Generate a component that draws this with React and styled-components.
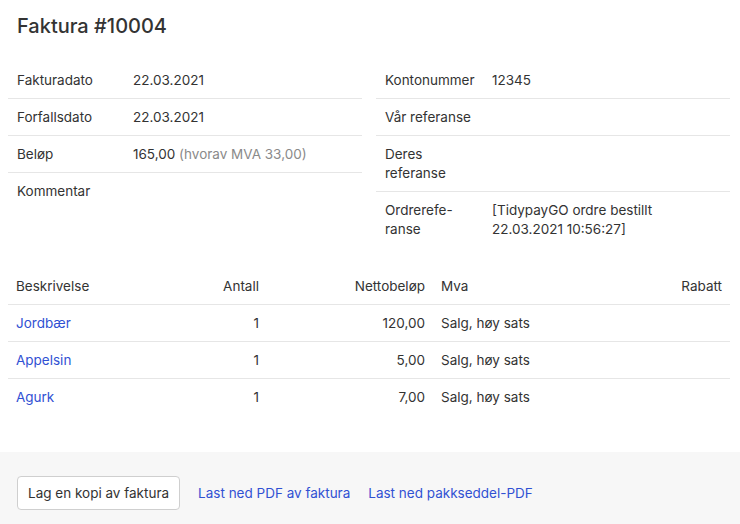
import React from "react";
import styled, { createGlobalStyle } from "styled-components";

const Global = createGlobalStyle`
  html, body { margin: 0; padding: 0; background: #fff; }
  body {
    font-family: Inter, "Noto Sans", "Liberation Sans", sans-serif;
    font-size: 13.5px;
    color: #333;
  }
`;

const Page = styled.div`
  display: flex;
  flex-direction: column;
  min-height: 524px;
`;

const Content = styled.div`
  padding: 0 10px 0 8px;
`;

const Title = styled.h1`
  margin: 0;
  padding: 14px 9px 23px;
  font-size: 20px;
  line-height: 25px;
  font-weight: 500;
  color: #333;
`;

const InfoGrid = styled.div`
  display: grid;
  grid-template-columns: 1fr 1fr;
  column-gap: 14px;
  align-items: start;
`;

const InfoColumn = styled.div`
  display: flex;
  flex-direction: column;
`;

const InfoRow = styled.div`
  display: grid;
  grid-template-columns: ${(p) => p.$labelWidth}px 1fr;
  padding: 9px 9px 8px;
  line-height: 19px;
  border-bottom: 1px solid #e6e6e6;
  &:last-child { border-bottom: none; }
`;

const Label = styled.div`
  color: #333;
`;

const Value = styled.div`
  color: #333;
`;

const Muted = styled.span`
  color: #8a8a8a;
`;

const Table = styled.div`
  margin-top: 21px;
  display: flex;
  flex-direction: column;
`;

const TRow = styled.div`
  display: grid;
  grid-template-columns: 172px 87px 166px 1fr 120px;
  line-height: 19px;
  border-bottom: 1px solid #e6e6e6;
  &:last-child { border-bottom: none; }
`;

const Cell = styled.div`
  padding: 9px 8px 8px;
  text-align: ${(p) => (p.$right ? "right" : "left")};
  color: #333;
`;

const Link = styled.a`
  color: #3151d3;
  text-decoration: none;
  cursor: pointer;
`;

const Footer = styled.div`
  margin-top: 37px;
  flex: 1;
  background: #f7f7f7;
  padding: 24px 17px;
  display: flex;
  align-items: center;
  gap: 18px;
`;

const Button = styled.button`
  font-family: inherit;
  font-size: 13.5px;
  color: #333;
  background: #fff;
  border: 1px solid #cfcfcf;
  border-radius: 4px;
  height: 34px;
  padding: 0 10px;
  cursor: pointer;
`;

const FooterLink = styled(Link)`
  font-size: 13.5px;
`;

const leftRows = [
  ["Fakturadato", "22.03.2021"],
  ["Forfallsdato", "22.03.2021"],
  ["Beløp", <>165,00 <Muted>(hvorav MVA 33,00)</Muted></>],
  ["Kommentar", ""],
];

const rightRows = [
  ["Kontonummer", "12345"],
  ["Vår referanse", ""],
  [<>Deres<br />referanse</>, ""],
  [<>Ordrerefe-<br />ranse</>, <>[TidypayGO ordre bestillt<br />22.03.2021 10:56:27]</>],
];

const items = [
  ["Jordbær", "1", "120,00", "Salg, høy sats"],
  ["Appelsin", "1", "5,00", "Salg, høy sats"],
  ["Agurk", "1", "7,00", "Salg, høy sats"],
];

export default function App() {
  return (
    <Page>
      <Global />
      <Content>
        <Title>Faktura #10004</Title>
        <InfoGrid>
          <InfoColumn>
            {leftRows.map(([l, v], i) => (
              <InfoRow key={i} $labelWidth={116}>
                <Label>{l}</Label>
                <Value>{v}</Value>
              </InfoRow>
            ))}
          </InfoColumn>
          <InfoColumn>
            {rightRows.map(([l, v], i) => (
              <InfoRow key={i} $labelWidth={107}>
                <Label>{l}</Label>
                <Value>{v}</Value>
              </InfoRow>
            ))}
          </InfoColumn>
        </InfoGrid>
        <Table>
          <TRow>
            <Cell>Beskrivelse</Cell>
            <Cell $right>Antall</Cell>
            <Cell $right>Nettobeløp</Cell>
            <Cell>Mva</Cell>
            <Cell $right>Rabatt</Cell>
          </TRow>
          {items.map(([name, qty, net, vat]) => (
            <TRow key={name}>
              <Cell><Link>{name}</Link></Cell>
              <Cell $right>{qty}</Cell>
              <Cell $right>{net}</Cell>
              <Cell>{vat}</Cell>
              <Cell $right></Cell>
            </TRow>
          ))}
        </Table>
      </Content>
      <Footer>
        <Button>Lag en kopi av faktura</Button>
        <FooterLink>Last ned PDF av faktura</FooterLink>
        <FooterLink>Last ned pakkseddel-PDF</FooterLink>
      </Footer>
    </Page>
  );
}
